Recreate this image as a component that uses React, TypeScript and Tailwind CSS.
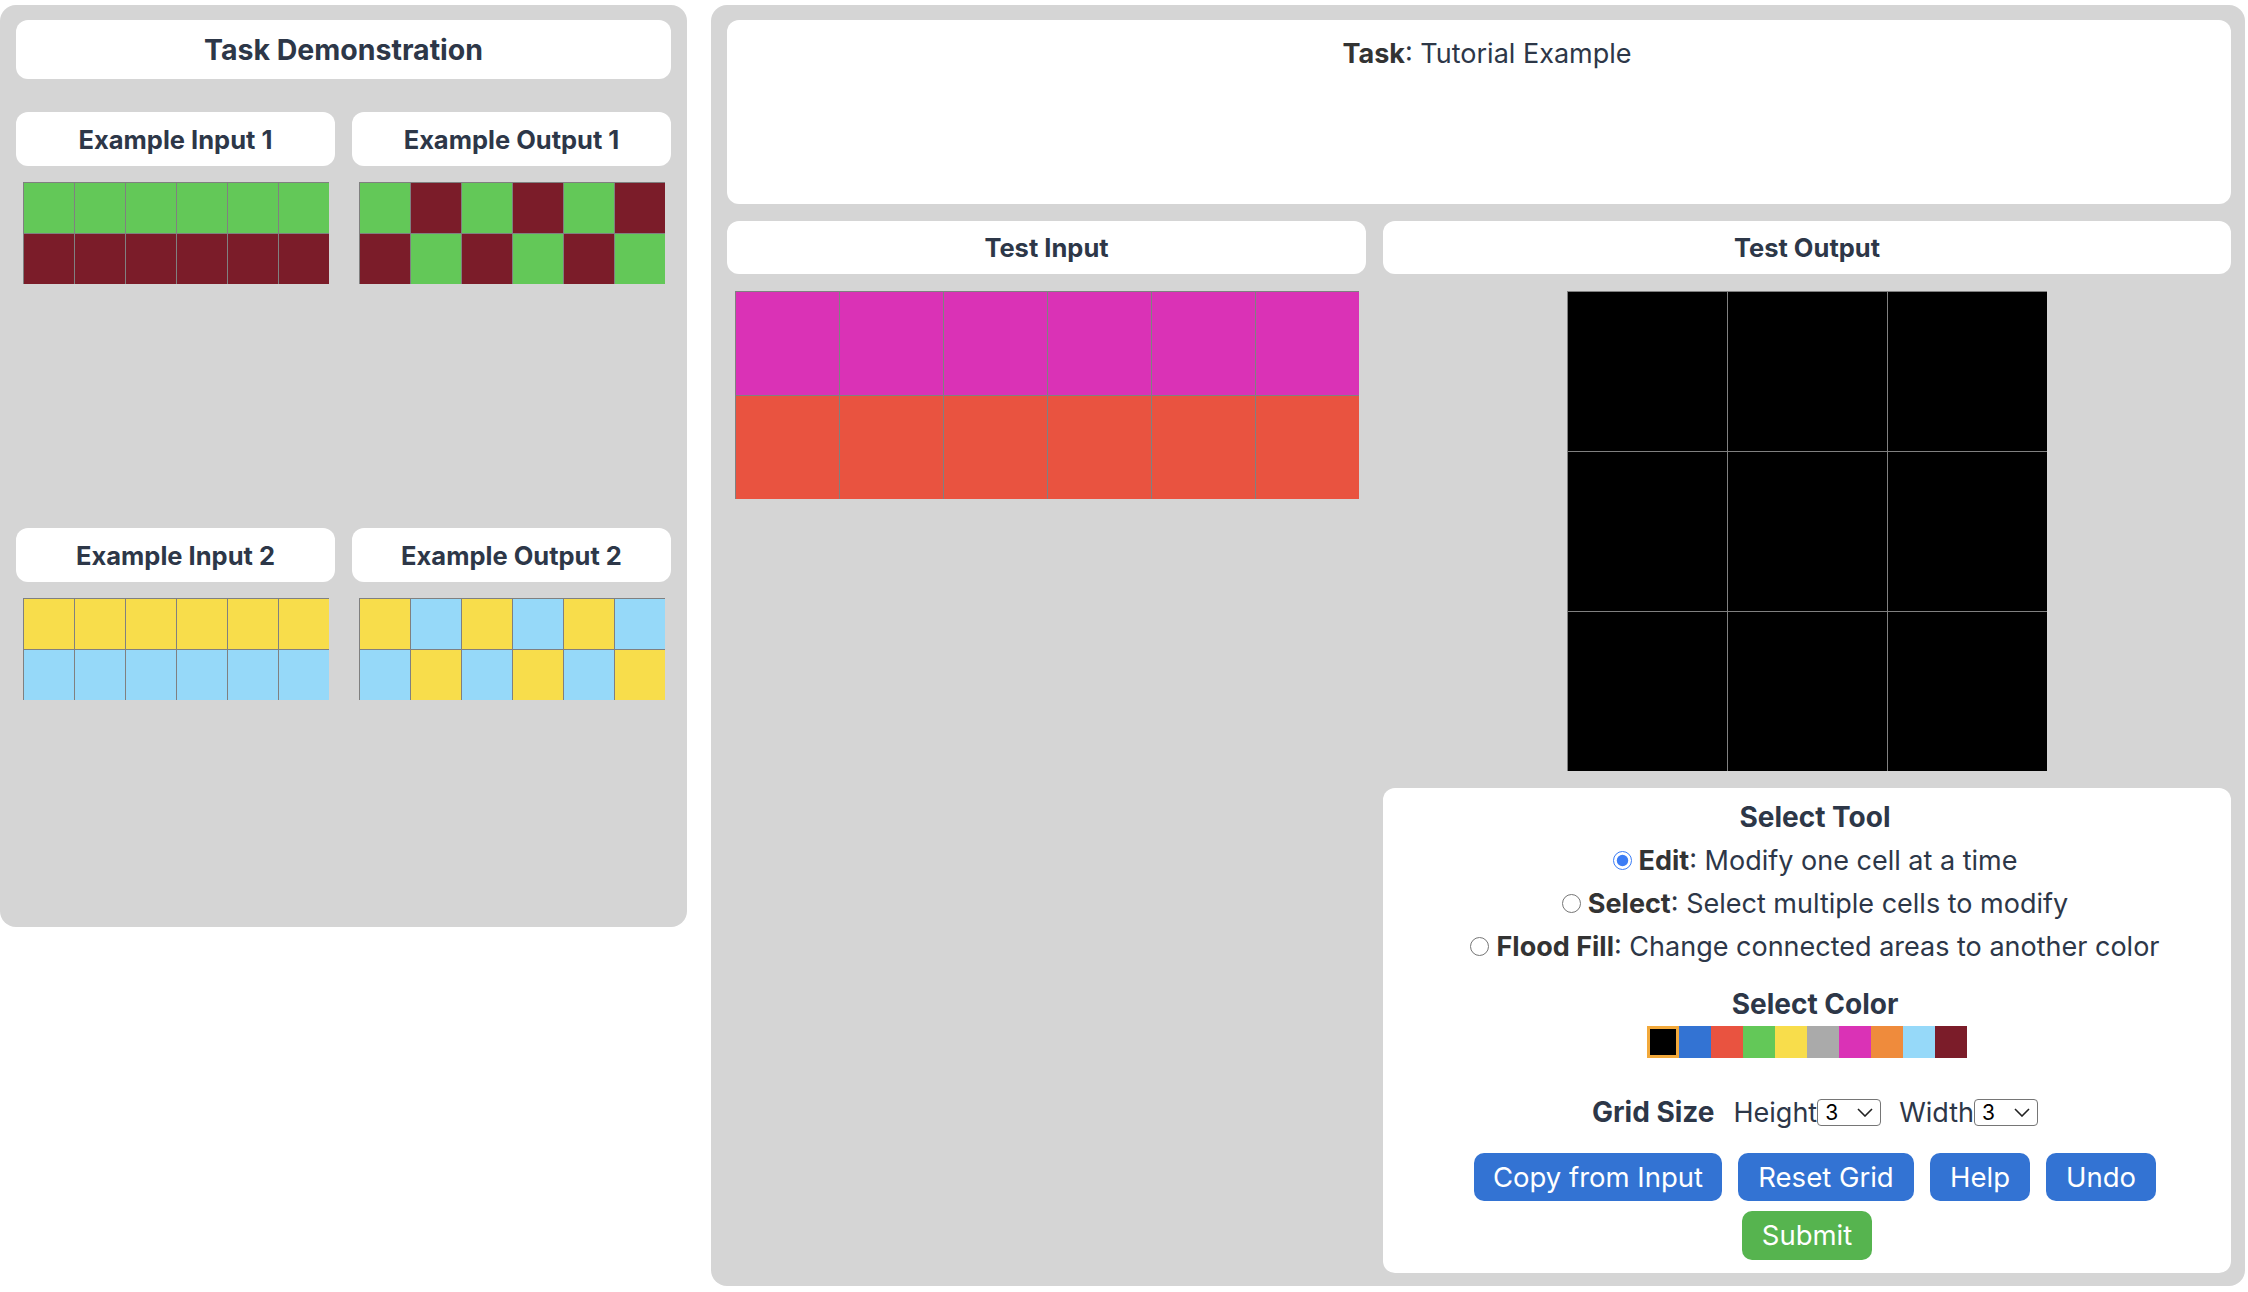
import React from "react";

const COLORS: Record<string, string> = {
  k: "#000000",
  b: "#3373d3",
  r: "#e95340",
  g: "#63c858",
  y: "#f8dd4b",
  a: "#aaaaaa",
  m: "#da32b6",
  o: "#ef8b3c",
  l: "#96d9f9",
  w: "#7b1c29",
};

function Grid({ rows, cell }: { rows: string[]; cell: number }) {
  return (
    <div className="flex flex-col">
      {rows.map((row, i) => (
        <div key={i} className="flex">
          {row.split("").map((c, j) => (
            <div
              key={j}
              className="box-border border-l border-t border-[#808080]"
              style={{ width: cell, height: cell, backgroundColor: COLORS[c] }}
            />
          ))}
        </div>
      ))}
    </div>
  );
}

function SubHeader({ children, h }: { children: React.ReactNode; h: string }) {
  return (
    <div
      className={`${h} bg-white rounded-xl flex items-center justify-center pt-[2px] text-[25.5px] font-bold text-[#2d3748]`}
    >
      {children}
    </div>
  );
}

function ExamplePair({ n, input, output }: { n: number; input: string[]; output: string[] }) {
  return (
    <div className="h-[400px] grid grid-cols-2 gap-[17px]">
      <div className="flex flex-col">
        <SubHeader h="h-[54px]">Example Input {n}</SubHeader>
        <div className="mt-4 flex justify-center">
          <Grid rows={input} cell={51} />
        </div>
      </div>
      <div className="flex flex-col">
        <SubHeader h="h-[54px]">Example Output {n}</SubHeader>
        <div className="mt-4 flex justify-center">
          <Grid rows={output} cell={51} />
        </div>
      </div>
    </div>
  );
}

function FakeSelect() {
  return (
    <div className="w-[64px] h-[27px] box-border border border-[#767676] rounded-[4px] flex items-center justify-between pl-[7px] pr-[7px] bg-white">
      <span className="text-[21px] leading-none text-black">3</span>
      <svg width="16" height="9" viewBox="0 0 16 9" fill="none">
        <path d="M1 1 L8 8 L15 1" stroke="#222" strokeWidth="1.6" />
      </svg>
    </div>
  );
}

function Radio({ checked }: { checked?: boolean }) {
  return (
    <input
      type="radio"
      name="tool"
      checked={!!checked}
      readOnly
      className="m-0 w-[19px] h-[19px] accent-[#3b7cf5]"
    />
  );
}

export default function App() {
  const palette = ["k", "b", "r", "g", "y", "a", "m", "o", "l", "w"];
  return (
    <div className="flex items-start font-['Inter',sans-serif] text-[#2d3748] bg-white min-h-[1292px]">
      {/* Left panel */}
      <div className="w-[687px] h-[922px] mt-[5px] bg-[#d5d5d5] rounded-2xl px-4 pt-[15px] box-border shrink-0">
        <div className="h-[59px] bg-white rounded-xl flex items-center justify-center pt-[2px] text-[28.5px] font-bold text-[#2d3748]">
          Task Demonstration
        </div>
        <div className="mt-[33px] flex flex-col gap-4">
          <ExamplePair n={1} input={["gggggg", "wwwwww"]} output={["gwgwgw", "wgwgwg"]} />
          <ExamplePair n={2} input={["yyyyyy", "llllll"]} output={["ylylyl", "lylyly"]} />
        </div>
      </div>

      {/* Right panel */}
      <div className="w-[1534px] h-[1281px] ml-[24px] mt-[5px] bg-[#d5d5d5] rounded-2xl pl-4 pr-[14px] pt-[15px] box-border shrink-0">
        <div className="h-[184px] bg-white rounded-xl pt-[13px] pl-4 text-center text-[27px] leading-[42px] text-[#2d3748]">
          <span className="font-bold text-[#333333]">Task</span>: Tutorial Example
        </div>
        <div className="mt-[17px] flex gap-[17px]">
          <div className="w-[639px] shrink-0 flex flex-col">
            <SubHeader h="h-[53px]">Test Input</SubHeader>
            <div className="mt-[17px] flex justify-center">
              <Grid rows={["mmmmmm", "rrrrrr"]} cell={104} />
            </div>
          </div>
          <div className="flex-1 flex flex-col">
            <SubHeader h="h-[53px]">Test Output</SubHeader>
            <div className="mt-[17px] flex justify-center">
              <Grid rows={["kkk", "kkk", "kkk"]} cell={160} />
            </div>
            <div className="mt-[17px] h-[485px] bg-white rounded-xl pt-[8px] pl-6 pr-2 box-border flex flex-col items-center text-[27px] leading-[43px] text-[#2d3748]">
              <div className="font-bold text-[28px]">Select Tool</div>
              <label className="flex items-center gap-[7px]">
                <Radio checked />
                <span>
                  <b className="font-bold text-[#333333]">Edit</b>: Modify one cell at a time
                </span>
              </label>
              <label className="flex items-center gap-[7px]">
                <Radio />
                <span>
                  <b className="font-bold text-[#333333]">Select</b>: Select multiple cells to modify
                </span>
              </label>
              <label className="flex items-center gap-[7px]">
                <Radio />
                <span>
                  <b className="font-bold text-[#333333]">Flood Fill</b>: Change connected areas to another color
                </span>
              </label>
              <div className="mt-[15px] font-bold text-[28px]">Select Color</div>
              <div className="flex mr-4">
                {palette.map((c, i) => (
                  <div
                    key={c}
                    className={
                      i === 0
                        ? "w-[32px] h-[32px] box-border border-[3px] border-[#f2a93b]"
                        : "w-[32px] h-[32px]"
                    }
                    style={{ backgroundColor: COLORS[c] }}
                  />
                ))}
              </div>
              <div className="mt-[33px] flex items-center">
                <span className="font-bold text-[28px]">Grid Size</span>
                <span className="ml-[19px]">Height</span>
                <FakeSelect />
                <span className="ml-[18px]">Width</span>
                <FakeSelect />
              </div>
              <div className="mt-[19px] flex gap-4 justify-center">
                <button className="w-[248px] h-[48px] rounded-[10px] bg-[#3373d3] text-white text-[27.5px]">
                  Copy from Input
                </button>
                <button className="w-[176px] h-[48px] rounded-[10px] bg-[#3373d3] text-white text-[27.5px]">
                  Reset Grid
                </button>
                <button className="w-[100px] h-[48px] rounded-[10px] bg-[#3373d3] text-white text-[27.5px]">
                  Help
                </button>
                <button className="w-[110px] h-[48px] rounded-[10px] bg-[#3373d3] text-white text-[27.5px]">
                  Undo
                </button>
              </div>
              <button className="mt-[10px] mr-4 w-[130px] h-[49px] rounded-[10px] bg-[#56b44f] text-white text-[27.5px]">
                Submit
              </button>
            </div>
          </div>
        </div>
      </div>
    </div>
  );
}
